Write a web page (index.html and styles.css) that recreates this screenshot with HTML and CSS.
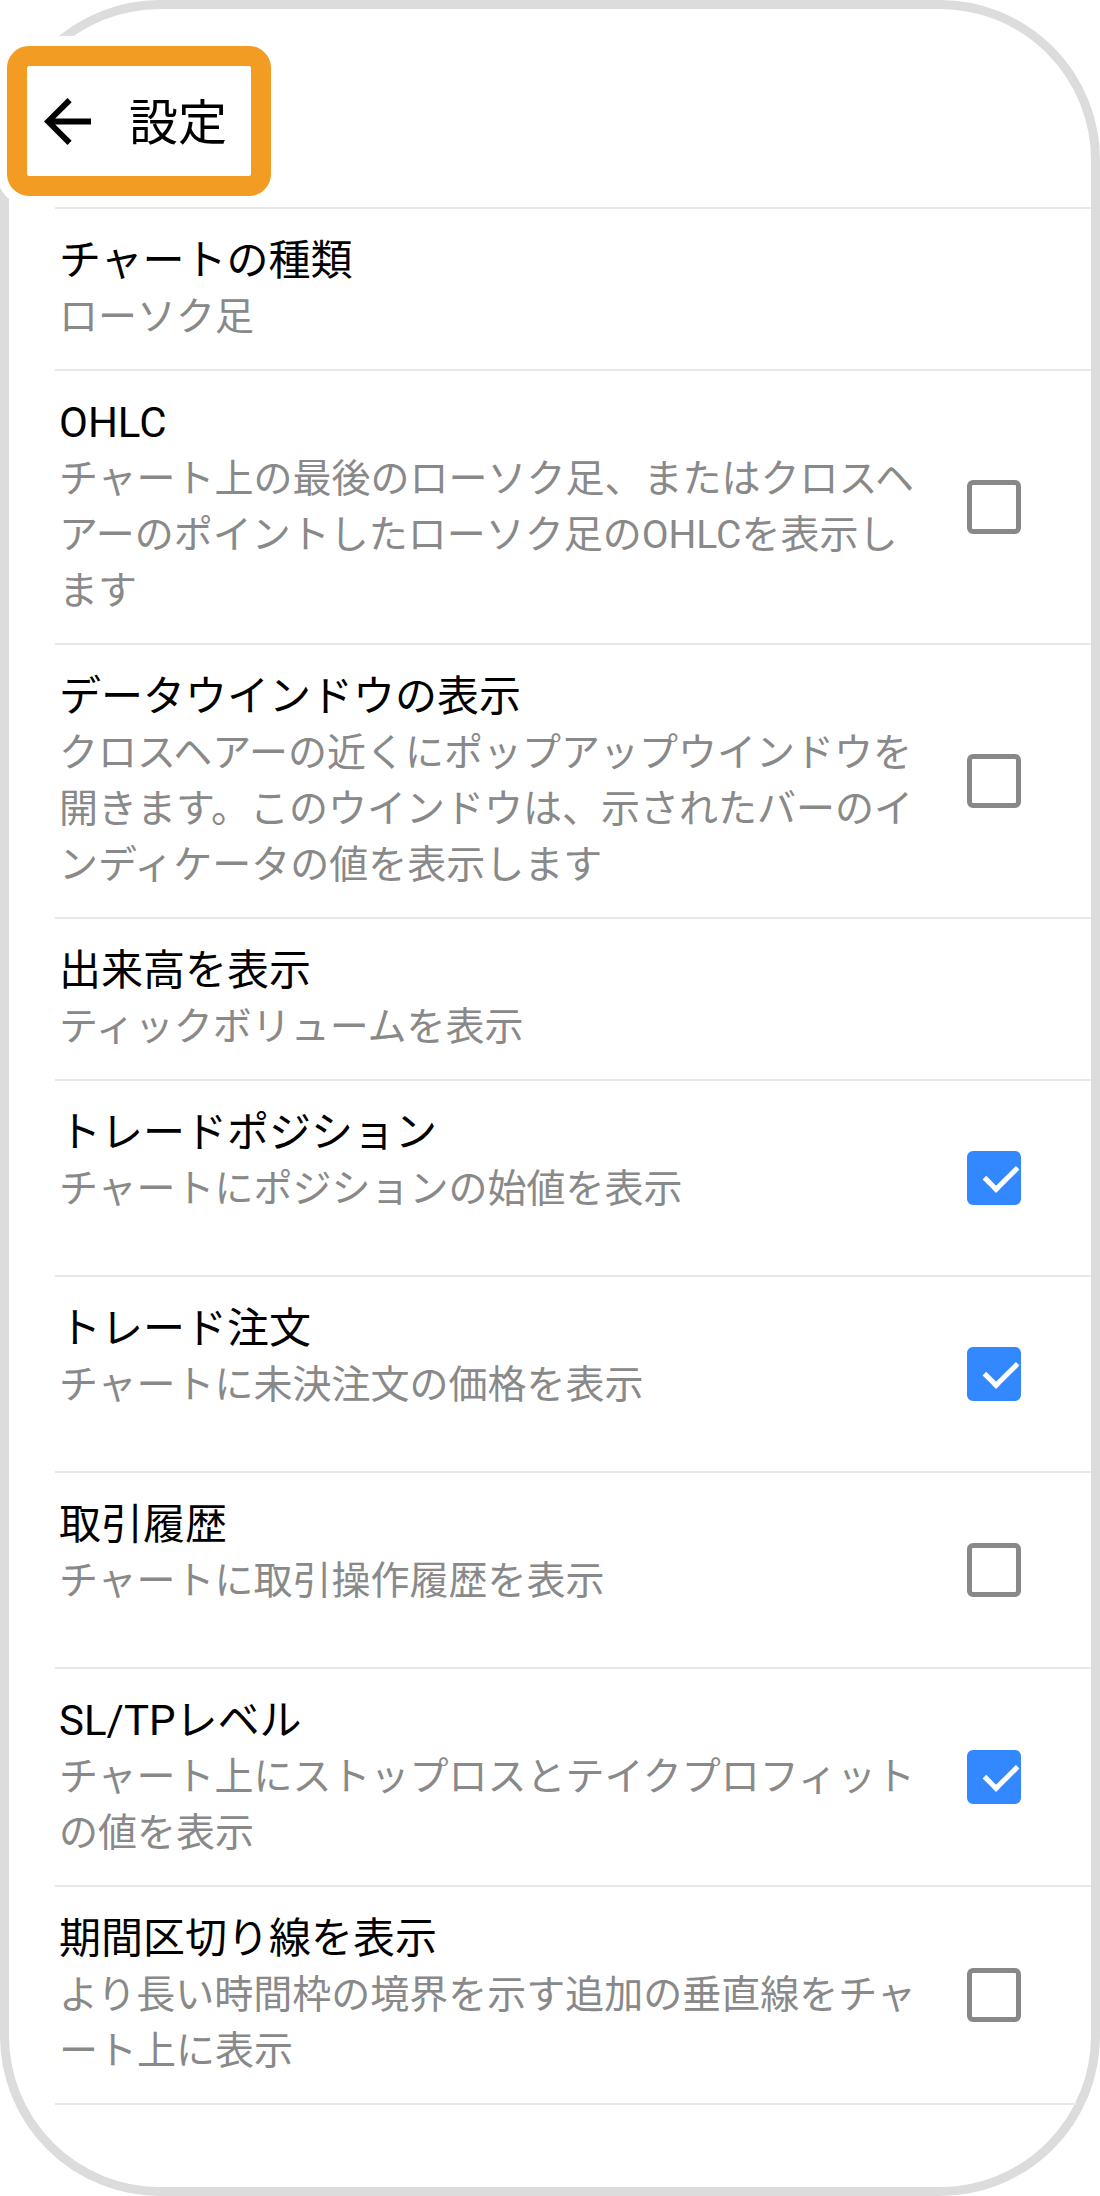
FILE: index.html
```html
<!DOCTYPE html>
<html lang="ja">
<head>
    <meta charset="UTF-8">
    <meta name="viewport" content="width=device-width, initial-scale=1.0">
    <title>設定</title>
    <link rel="stylesheet" href="styles.css">
</head>
<body>
    <div class="phone">
        <div class="header">
            <div class="highlight">
                <svg class="back" viewBox="4 4 16 16" width="47" height="47">
                    <path d="M20 11H7.83l5.59-5.59L12 4l-8 8 8 8 1.41-1.41L7.83 13H20v-2z" fill="#000"/>
                </svg>
                <span class="title">設定</span>
            </div>
        </div>

        <div class="list">
            <div class="row">
                <div class="text">
                    <div class="name">チャートの種類</div>
                    <div class="desc">ローソク足</div>
                </div>
            </div>
            <div class="row">
                <div class="text">
                    <div class="name">OHLC</div>
                    <div class="desc">チャート上の最後のローソク足、またはクロスヘアーのポイントしたローソク足のOHLCを表示します</div>
                </div>
                <span class="check"></span>
            </div>
            <div class="row">
                <div class="text">
                    <div class="name">データウインドウの表示</div>
                    <div class="desc">クロスヘアーの近くにポップアップウインドウを開きます。このウインドウは、示されたバーのインディケータの値を表示します</div>
                </div>
                <span class="check"></span>
            </div>
            <div class="row">
                <div class="text">
                    <div class="name">出来高を表示</div>
                    <div class="desc">ティックボリュームを表示</div>
                </div>
            </div>
            <div class="row">
                <div class="text">
                    <div class="name">トレードポジション</div>
                    <div class="desc">チャートにポジションの始値を表示</div>
                </div>
                <span class="check on"></span>
            </div>
            <div class="row">
                <div class="text">
                    <div class="name">トレード注文</div>
                    <div class="desc">チャートに未決注文の価格を表示</div>
                </div>
                <span class="check on"></span>
            </div>
            <div class="row">
                <div class="text">
                    <div class="name">取引履歴</div>
                    <div class="desc">チャートに取引操作履歴を表示</div>
                </div>
                <span class="check"></span>
            </div>
            <div class="row">
                <div class="text">
                    <div class="name">SL/TPレベル</div>
                    <div class="desc">チャート上にストップロスとテイクプロフィットの値を表示</div>
                </div>
                <span class="check on"></span>
            </div>
            <div class="row">
                <div class="text">
                    <div class="name">期間区切り線を表示</div>
                    <div class="desc">より長い時間枠の境界を示す追加の垂直線をチャート上に表示</div>
                </div>
                <span class="check"></span>
            </div>
        </div>
    </div>
</body>
</html>
```

FILE: styles.css
```css
* {
    box-sizing: border-box;
}

body {
    margin: 0;
    background: #fff;
    font-family: Roboto, "Noto Sans CJK JP", sans-serif;
    color: #000;
}

.phone {
    width: 1100px;
    height: 2196px;
    border: 9px solid #dcdcdc;
    border-radius: 160px;
    background: #fff;
}

/* orange box is a screenshot annotation, drawn over the frame */
.header {
    padding: 37px 0 11px 0;
    margin-left: -2px;
}

.highlight {
    display: inline-flex;
    align-items: center;
    width: 264px;
    height: 150px;
    border: 20px solid #f29c24;
    border-radius: 22px;
    box-shadow: 0 0 0 10px #fff;
    padding: 0 0 0 17px;
    background: #fff;
    position: relative;
    z-index: 1;
}

.back {
    display: block;
    flex-shrink: 0;
}

.title {
    margin-left: 38px;
    font-size: 49px;
    line-height: 1;
    margin-top: 4px;
}

.list {
    margin-left: 46px;
    border-top: 2px solid #e8e8e8;
}

.list::after {
    content: "";
    display: block;
    height: 2px;
    margin-right: 14px;
    background: #e8e8e8;
}

.row {
    display: flex;
    padding: 24px 70px 24px 4px;
    border-bottom: 2px solid #e8e8e8;
    line-break: normal;
}

.row:last-child {
    border-bottom: 0;
}

.text {
    flex: 1;
}

.name {
    font-size: 42px;
    line-height: 56px;
}

.desc {
    font-size: 39px;
    line-height: 56px;
    color: #898989;
}

.check {
    flex-shrink: 0;
    align-self: center;
    width: 54px;
    height: 54px;
    margin: 46px 0 46px 40px;
    border: 5px solid #888;
    border-radius: 6px;
    position: relative;
}

.check.on {
    background: #3388ff;
    border-color: #3388ff;
}

.check.on::after {
    content: "";
    position: absolute;
    left: 9px;
    top: 4px;
    width: 28px;
    height: 14px;
    border-left: 5px solid #fff;
    border-bottom: 5px solid #fff;
    transform: rotate(-45deg) translate(-1px, 6px);
}
```
